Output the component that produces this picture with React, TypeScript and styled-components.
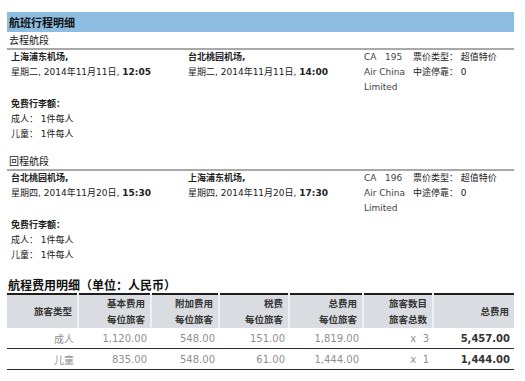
import React from "react";
import styled, { createGlobalStyle } from "styled-components";

const GlobalStyle = createGlobalStyle`
  body {
    margin: 0;
    background: #fff;
    font-family: "DejaVu Sans", "Noto Sans CJK SC", sans-serif;
    color: #222;
  }
`;

const Page = styled.div`
  width: 507px;
  margin-left: 7px;
  padding-top: 12px;
`;

const TitleBar = styled.h2`
  margin: 0;
  height: 20px;
  line-height: 20px;
  padding-left: 2px;
  background: #8dbee1;
  font-family: "Noto Sans CJK SC", sans-serif;
  font-size: 11px;
  font-weight: 700;
  color: #111;
`;

const SegmentLabel = styled.div<{ $gap: number }>`
  margin-top: ${(p) => p.$gap}px;
  padding-left: 2px;
  line-height: 15px;
  font-size: 10px;
  border-bottom: 2px solid #a9a9a9;
`;

const FlightRow = styled.div`
  display: grid;
  grid-template-columns: 177px 176px 49px 1fr;
  padding-left: 4px;
  font-size: 9px;
  line-height: 15px;
`;

const Cell = styled.div`
  display: flex;
  flex-direction: column;
`;

const Airport = styled.span`
  font-weight: 700;
`;

const Flight = styled.span`
  color: #444;
`;

const Baggage = styled.div`
  margin-top: 2px;
  padding-left: 4px;
  font-size: 9px;
  line-height: 15px;
  display: flex;
  flex-direction: column;
`;

const BagTitle = styled.span`
  font-weight: 700;
`;

const CostTitle = styled.h3`
  margin: 14px 0 0;
  padding-left: 1px;
  font-family: "Noto Sans CJK SC", sans-serif;
  font-size: 12px;
  line-height: 16px;
  font-weight: 700;
  color: #111;
`;

const Table = styled.table`
  width: 507px;
  border-collapse: collapse;
  border-top: 2px solid #1e1e1e;
  font-size: 10px;
  table-layout: fixed;
`;

const Th = styled.th<{ $w?: number }>`
  box-sizing: border-box;
  width: ${(p) => (p.$w ? `${p.$w}px` : "auto")};
  height: 34px;
  padding: 0 5px 0 0;
  background: #d9dce1;
  border-left: 2px solid #eef0f2;
  text-align: right;
  font-weight: 700;
  font-size: 9.5px;
  line-height: 16px;
  color: #333;
  &:first-child {
    border-left: none;
  }
`;

const Td = styled.td<{ $strong?: boolean }>`
  height: 20px;
  padding: 0 4px 0 0;
  border-bottom: 1px solid #2a2a2a;
  text-align: right;
  white-space: pre;
  color: ${(p) => (p.$strong ? "#333" : "#8f8f8f")};
  font-weight: ${(p) => (p.$strong ? 700 : 400)};
`;

type Leg = {
  label: string;
  gap: number;
  from: string;
  depart: [string, string];
  to: string;
  arrive: [string, string];
  no: string;
};

const legs: Leg[] = [
  {
    label: "去程航段",
    gap: 1,
    from: "上海浦东机场,",
    depart: ["星期二, 2014年11月11日, ", "12:05"],
    to: "台北桃园机场,",
    arrive: ["星期二, 2014年11月11日, ", "14:00"],
    no: "195",
  },
  {
    label: "回程航段",
    gap: 12,
    from: "台北桃园机场,",
    depart: ["星期四, 2014年11月20日, ", "15:30"],
    to: "上海浦东机场,",
    arrive: ["星期四, 2014年11月20日, ", "17:30"],
    no: "196",
  },
];

const heads: { w?: number; lines: string[] }[] = [
  { w: 71, lines: ["旅客类型"] },
  { w: 73, lines: ["基本费用", "每位旅客"] },
  { w: 68, lines: ["附加费用", "每位旅客"] },
  { w: 70, lines: ["税费", "每位旅客"] },
  { w: 74, lines: ["总费用", "每位旅客"] },
  { w: 70, lines: ["旅客数目", "旅客总数"] },
  { lines: ["总费用"] },
];

const rows = [
  ["成人", "1,120.00", "548.00", "151.00", "1,819.00", "x  3", "5,457.00"],
  ["儿童", "835.00", "548.00", "61.00", "1,444.00", "x  1", "1,444.00"],
];

export default function App() {
  return (
    <>
      <GlobalStyle />
      <Page>
        <TitleBar>航班行程明细</TitleBar>
        {legs.map((leg) => (
          <section key={leg.label}>
            <SegmentLabel $gap={leg.gap}>{leg.label}</SegmentLabel>
            <FlightRow>
              <Cell>
                <Airport>{leg.from}</Airport>
                <span>
                  {leg.depart[0]}
                  <b>{leg.depart[1]}</b>
                </span>
              </Cell>
              <Cell>
                <Airport>{leg.to}</Airport>
                <span>
                  {leg.arrive[0]}
                  <b>{leg.arrive[1]}</b>
                </span>
              </Cell>
              <Cell>
                <Flight>CA&nbsp;&nbsp;&nbsp;{leg.no}</Flight>
                <Flight>Air China</Flight>
                <Flight>Limited</Flight>
              </Cell>
              <Cell>
                <span>票价类型： 超值特价</span>
                <span>中途停靠： 0</span>
              </Cell>
            </FlightRow>
            <Baggage>
              <BagTitle>免费行李额：</BagTitle>
              <span>成人： 1件每人</span>
              <span>儿童： 1件每人</span>
            </Baggage>
          </section>
        ))}

        <CostTitle>航程费用明细（单位：人民币）</CostTitle>
        <Table>
          <thead>
            <tr>
              {heads.map((h, i) => (
                <Th key={i} $w={h.w}>
                  {h.lines.map((l, j) => (
                    <div key={j}>{l}</div>
                  ))}
                </Th>
              ))}
            </tr>
          </thead>
          <tbody>
            {rows.map((r, i) => (
              <tr key={i}>
                {r.map((c, j) => (
                  <Td key={j} $strong={j === r.length - 1}>
                    {c}
                  </Td>
                ))}
              </tr>
            ))}
          </tbody>
        </Table>
      </Page>
    </>
  );
}
